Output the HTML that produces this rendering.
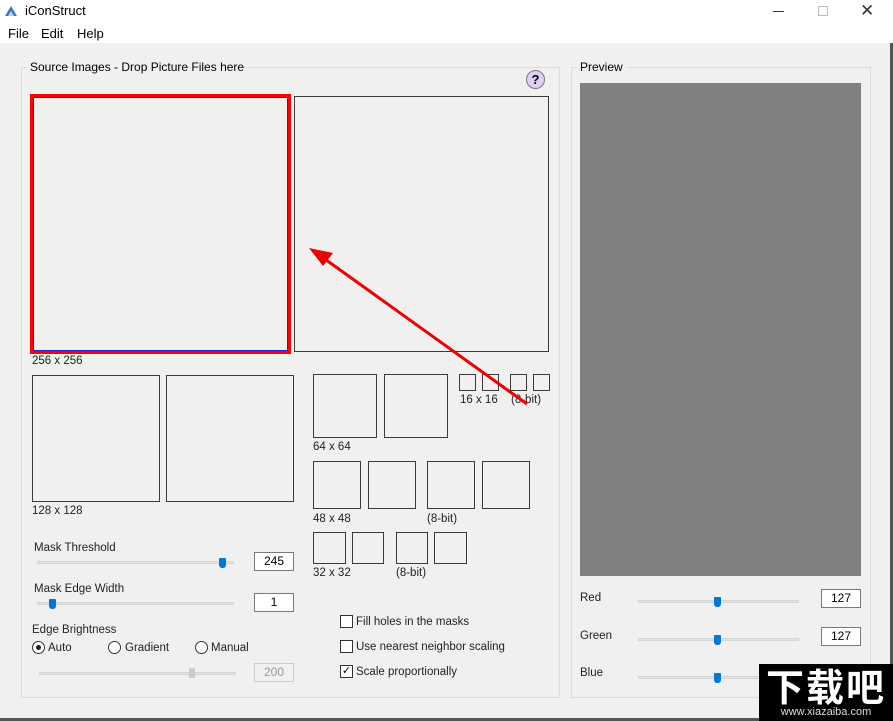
<!DOCTYPE html><html><head><style>
body{margin:0;width:893px;height:721px;position:relative;background:#f0f0f0;font-family:"Segoe UI","Liberation Sans",sans-serif;font-size:12px;color:#000;overflow:hidden}
.a{position:absolute}
.b{position:absolute;border:1px solid #3c3c3c;box-sizing:border-box;background:#f0f0f0}
.t{position:absolute;font-size:11.5px;color:#222;white-space:nowrap;margin-top:2px}
.g{position:absolute;border:1px solid #dcdcdc;box-sizing:border-box}
.tr{position:absolute;height:3px;background:#e3e3e3;border:1px solid #d6d6d6;box-sizing:border-box}
.th{position:absolute;width:7px;height:10px;background:#0078d7;border-radius:1px 1px 3px 3px}
.in{position:absolute;background:#fff;border:1px solid #7a7a7a;box-sizing:border-box;text-align:center;font-size:12px;line-height:16px}
.cb{position:absolute;width:13px;height:13px;border:1px solid #333;box-sizing:border-box;background:#fff}
.rd{position:absolute;width:13px;height:13px;border:1px solid #333;border-radius:50%;box-sizing:border-box;background:#fff}
</style></head><body>
<div class="a" style="left:0;top:0;width:893px;height:43px;background:#fff"></div>
<svg class="a" style="left:4px;top:5px" width="14" height="12"><path d="M1 11 L7 1 L13 11Z" fill="#3a78c2"/><path d="M4 11 L7 6 L10 11Z" fill="#ccd"/></svg>
<div class="a" style="left:25px;top:3px;font-size:13px">iConStruct</div>
<div class="a" style="left:773px;top:11px;width:11px;height:1px;background:#333"></div>
<div class="a" style="left:818px;top:6px;width:10px;height:10px;border:1px solid #bbb;box-sizing:border-box"></div>
<div class="a" style="left:860px;top:1px;font-size:17px;color:#333">✕</div>
<div class="a" style="left:8px;top:26px;font-size:13px">File</div>
<div class="a" style="left:41px;top:26px;font-size:13px">Edit</div>
<div class="a" style="left:77px;top:26px;font-size:13px">Help</div>
<div class="a" style="left:890px;top:43px;width:3px;height:678px;background:#555"></div>
<div class="a" style="left:0;top:718px;width:893px;height:3px;background:#555"></div>

<div class="g" style="left:21px;top:67px;width:539px;height:631px"></div>
<div class="a" style="left:27px;top:60px;background:#f0f0f0;padding:0 3px;font-size:12px">Source Images - Drop Picture Files here</div>
<div class="a" style="left:526px;top:70px;width:19px;height:19px;border-radius:50%;background:#dcd0f5;border:1px solid #777;box-sizing:border-box;text-align:center;font-weight:bold;font-size:13px;line-height:17px">?</div>

<div class="a" style="left:30px;top:94px;width:261px;height:260px;border:3px solid #f00;box-sizing:border-box"><div style="position:absolute;left:0;top:0;right:0;bottom:0;border:1px solid #22c"></div></div>
<div class="b" style="left:294px;top:96px;width:255px;height:256px"></div>
<div class="t" style="left:32px;top:353px">256 x 256</div>
<div class="b" style="left:32px;top:375px;width:128px;height:127px"></div>
<div class="b" style="left:166px;top:375px;width:128px;height:127px"></div>
<div class="t" style="left:32px;top:503px">128 x 128</div>
<div class="b" style="left:313px;top:374px;width:64px;height:64px"></div>
<div class="b" style="left:384px;top:374px;width:64px;height:64px"></div>
<div class="t" style="left:313px;top:439px">64 x 64</div>
<div class="b" style="left:459px;top:374px;width:17px;height:17px"></div>
<div class="b" style="left:482px;top:374px;width:17px;height:17px"></div>
<div class="b" style="left:510px;top:374px;width:17px;height:17px"></div>
<div class="b" style="left:533px;top:374px;width:17px;height:17px"></div>
<div class="t" style="left:460px;top:392px">16 x 16</div>
<div class="t" style="left:511px;top:392px">(8-bit)</div>
<div class="b" style="left:313px;top:461px;width:48px;height:48px"></div>
<div class="b" style="left:368px;top:461px;width:48px;height:48px"></div>
<div class="b" style="left:427px;top:461px;width:48px;height:48px"></div>
<div class="b" style="left:482px;top:461px;width:48px;height:48px"></div>
<div class="t" style="left:313px;top:511px">48 x 48</div>
<div class="t" style="left:427px;top:511px">(8-bit)</div>
<div class="b" style="left:313px;top:532px;width:33px;height:32px"></div>
<div class="b" style="left:352px;top:532px;width:32px;height:32px"></div>
<div class="b" style="left:396px;top:532px;width:32px;height:32px"></div>
<div class="b" style="left:434px;top:532px;width:33px;height:32px"></div>
<div class="t" style="left:313px;top:565px">32 x 32</div>
<div class="t" style="left:396px;top:565px">(8-bit)</div>

<svg class="a" style="left:0;top:0" width="893" height="721"><line x1="527" y1="404" x2="322" y2="257" stroke="#e00" stroke-width="3"/><path d="M309 248 L333 253 L323 266Z" fill="#e00"/></svg>

<div class="t" style="left:34px;top:540px">Mask Threshold</div>
<div class="tr" style="left:37px;top:561px;width:197px"></div><div class="th" style="left:219px;top:558px"></div>
<div class="in" style="left:254px;top:552px;width:40px;height:19px">245</div>
<div class="t" style="left:34px;top:581px">Mask Edge Width</div>
<div class="tr" style="left:37px;top:602px;width:197px"></div><div class="th" style="left:49px;top:599px"></div>
<div class="in" style="left:254px;top:593px;width:40px;height:19px">1</div>
<div class="t" style="left:32px;top:622px">Edge Brightness</div>
<div class="rd" style="left:32px;top:641px"><div style="position:absolute;left:3px;top:3px;width:5px;height:5px;border-radius:50%;background:#222"></div></div>
<div class="t" style="left:48px;top:640px">Auto</div>
<div class="rd" style="left:108px;top:641px"></div><div class="t" style="left:125px;top:640px">Gradient</div>
<div class="rd" style="left:195px;top:641px"></div><div class="t" style="left:211px;top:640px">Manual</div>
<div class="tr" style="left:39px;top:672px;width:197px"></div><div class="a" style="left:189px;top:668px;width:6px;height:10px;background:#ccc"></div>
<div class="in" style="left:254px;top:663px;width:40px;height:19px;border-color:#ccc;background:#f0f0f0;color:#999">200</div>

<div class="cb" style="left:340px;top:615px"></div><div class="t" style="left:356px;top:614px">Fill holes in the masks</div>
<div class="cb" style="left:340px;top:640px"></div><div class="t" style="left:356px;top:639px">Use nearest neighbor scaling</div>
<div class="cb" style="left:340px;top:665px;font-size:11px;line-height:11px;text-align:center">✓</div><div class="t" style="left:356px;top:664px">Scale proportionally</div>

<div class="g" style="left:571px;top:67px;width:300px;height:631px"></div>
<div class="a" style="left:577px;top:60px;background:#f0f0f0;padding:0 3px;font-size:12px">Preview</div>
<div class="a" style="left:580px;top:83px;width:281px;height:493px;background:#808080"></div>
<div class="t" style="left:580px;top:590px">Red</div>
<div class="tr" style="left:638px;top:600px;width:161px"></div><div class="th" style="left:714px;top:597px"></div>
<div class="in" style="left:821px;top:589px;width:40px;height:19px">127</div>
<div class="t" style="left:580px;top:628px">Green</div>
<div class="tr" style="left:638px;top:638px;width:161px"></div><div class="th" style="left:714px;top:635px"></div>
<div class="in" style="left:821px;top:627px;width:40px;height:19px">127</div>
<div class="t" style="left:580px;top:665px">Blue</div>
<div class="tr" style="left:638px;top:676px;width:161px"></div><div class="th" style="left:714px;top:673px"></div>

<div class="a" style="left:759px;top:664px;width:134px;height:57px;background:#000;color:#fff;text-align:center">
<div style="font-family:'Noto Sans CJK SC',sans-serif;font-weight:bold;font-size:38px;line-height:42px;letter-spacing:2px">下载吧</div>
<div style="font-size:11px;line-height:12px;color:#ddd">www.xiazaiba.com</div></div>
</body></html>
